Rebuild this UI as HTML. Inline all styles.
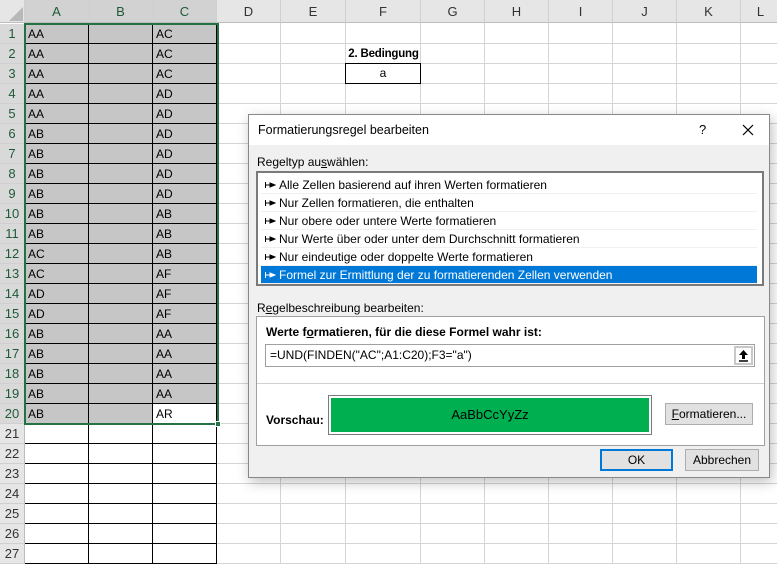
<!DOCTYPE html>
<html><head><meta charset="utf-8"><style>
*{margin:0;padding:0;box-sizing:border-box}
body{width:777px;height:563px;overflow:hidden;position:relative;background:#fff;font-family:"Liberation Sans",Arial,sans-serif;font-size:12px;color:#000}
.a{position:absolute}
.grid{left:25px;top:24px;width:752px;height:540px;
background-image:repeating-linear-gradient(to bottom,transparent 0px,transparent 19px,#d4d4d4 19px,#d4d4d4 20px)}
.vl{position:absolute;top:0;width:1px;height:563px;background:#d4d4d4}
.hdr{top:0;height:23px;background:#e6e6e6;border-bottom:1px solid #bdbdbd;text-align:center;line-height:23px;font-size:13px;color:#333;border-right:1px solid #d0d0d0}
.hs{background:#d2d2d2;color:#1e5a37}
.rh{left:0;width:25px;height:20px;background:#e6e6e6;border-bottom:1px solid #d0d0d0;border-right:1px solid #bdbdbd;text-align:center;line-height:20px;font-size:13px;color:#333}
.rs{background:#d9d9d9;color:#1e5a37}
.c{height:20px;line-height:20px;padding-left:3px;font-size:12px;border-right:1px solid #000;border-bottom:1px solid #000}
.g{background:#c6c6c6}
.dlg{left:248px;top:114px;width:522px;height:364px;background:#f0f0f0;border:1px solid #888;box-shadow:2px 4px 12px rgba(0,0,0,.25)}
.li{position:absolute;left:3px;width:496px;height:18px;line-height:18px;padding-left:18px;font-size:12px;border-bottom:1px solid #f0f0f0}
.li svg{position:absolute;left:4px;top:6px}
.btn{position:absolute;background:#e1e1e1;border:1px solid #adadad;text-align:center;font-size:12px}
</style></head><body>
<div class="a grid"></div>
<div class="vl" style="left:280px"></div><div class="vl" style="left:345px"></div><div class="vl" style="left:420px"></div><div class="vl" style="left:484px"></div><div class="vl" style="left:548px"></div><div class="vl" style="left:612px"></div><div class="vl" style="left:676px"></div><div class="vl" style="left:740px"></div>
<div class="a hdr" style="left:0;width:25px;background:#e6e6e6"><svg width="14" height="14" style="position:absolute;left:9px;top:7px"><polygon points="14,0 14,14 0,14" fill="#b8b8b8"/></svg></div>
<div class="a hdr hs" style="left:25px;width:64px">A</div>
<div class="a hdr hs" style="left:89px;width:64px">B</div>
<div class="a hdr hs" style="left:153px;width:64px">C</div>
<div class="a hdr" style="left:217px;width:64px">D</div>
<div class="a hdr" style="left:281px;width:65px">E</div>
<div class="a hdr" style="left:346px;width:75px">F</div>
<div class="a hdr" style="left:421px;width:64px">G</div>
<div class="a hdr" style="left:485px;width:64px">H</div>
<div class="a hdr" style="left:549px;width:64px">I</div>
<div class="a hdr" style="left:613px;width:64px">J</div>
<div class="a hdr" style="left:677px;width:64px">K</div>
<div class="a hdr" style="left:741px;width:40px">L</div>
<div class="a rh rs" style="top:24px">1</div><div class="a rh rs" style="top:44px">2</div><div class="a rh rs" style="top:64px">3</div><div class="a rh rs" style="top:84px">4</div><div class="a rh rs" style="top:104px">5</div><div class="a rh rs" style="top:124px">6</div><div class="a rh rs" style="top:144px">7</div><div class="a rh rs" style="top:164px">8</div><div class="a rh rs" style="top:184px">9</div><div class="a rh rs" style="top:204px">10</div><div class="a rh rs" style="top:224px">11</div><div class="a rh rs" style="top:244px">12</div><div class="a rh rs" style="top:264px">13</div><div class="a rh rs" style="top:284px">14</div><div class="a rh rs" style="top:304px">15</div><div class="a rh rs" style="top:324px">16</div><div class="a rh rs" style="top:344px">17</div><div class="a rh rs" style="top:364px">18</div><div class="a rh rs" style="top:384px">19</div><div class="a rh rs" style="top:404px">20</div><div class="a rh" style="top:424px">21</div><div class="a rh" style="top:444px">22</div><div class="a rh" style="top:464px">23</div><div class="a rh" style="top:484px">24</div><div class="a rh" style="top:504px">25</div><div class="a rh" style="top:524px">26</div><div class="a rh" style="top:544px">27</div>
<div class="a" style="left:25px;top:24px;width:192px">
<div style="display:grid;grid-template-columns:64px 64px 64px">
<div class="c g">AA</div><div class="c g"></div><div class="c g">AC</div>
<div class="c g">AA</div><div class="c g"></div><div class="c g">AC</div>
<div class="c g">AA</div><div class="c g"></div><div class="c g">AC</div>
<div class="c g">AA</div><div class="c g"></div><div class="c g">AD</div>
<div class="c g">AA</div><div class="c g"></div><div class="c g">AD</div>
<div class="c g">AB</div><div class="c g"></div><div class="c g">AD</div>
<div class="c g">AB</div><div class="c g"></div><div class="c g">AD</div>
<div class="c g">AB</div><div class="c g"></div><div class="c g">AD</div>
<div class="c g">AB</div><div class="c g"></div><div class="c g">AD</div>
<div class="c g">AB</div><div class="c g"></div><div class="c g">AB</div>
<div class="c g">AB</div><div class="c g"></div><div class="c g">AB</div>
<div class="c g">AC</div><div class="c g"></div><div class="c g">AB</div>
<div class="c g">AC</div><div class="c g"></div><div class="c g">AF</div>
<div class="c g">AD</div><div class="c g"></div><div class="c g">AF</div>
<div class="c g">AD</div><div class="c g"></div><div class="c g">AF</div>
<div class="c g">AB</div><div class="c g"></div><div class="c g">AA</div>
<div class="c g">AB</div><div class="c g"></div><div class="c g">AA</div>
<div class="c g">AB</div><div class="c g"></div><div class="c g">AA</div>
<div class="c g">AB</div><div class="c g"></div><div class="c g">AA</div>
<div class="c g">AB</div><div class="c g"></div><div class="c">AR</div>
<div class="c"></div><div class="c"></div><div class="c"></div>
<div class="c"></div><div class="c"></div><div class="c"></div>
<div class="c"></div><div class="c"></div><div class="c"></div>
<div class="c"></div><div class="c"></div><div class="c"></div>
<div class="c"></div><div class="c"></div><div class="c"></div>
<div class="c"></div><div class="c"></div><div class="c"></div>
<div class="c"></div><div class="c"></div><div class="c"></div>
</div></div>
<div class="a" style="left:24px;top:23px;width:195px;height:402px;border:2px solid #217346"></div>
<div class="a" style="left:215px;top:421px;width:6px;height:6px;background:#217346;border:1px solid #fff"></div>
<div class="a" style="left:346px;top:44px;width:75px;height:20px;line-height:20px;text-align:center;font-weight:bold;font-size:11.5px;white-space:nowrap;letter-spacing:-0.2px">2. Bedingung</div>
<div class="a" style="left:345px;top:63px;width:76px;height:21px;border:1px solid #000;text-align:center;line-height:19px;font-size:12px;background:#fff">a</div>
<div class="a dlg">
 <div class="a" style="left:0;top:0;width:520px;height:30px;background:#fff;line-height:30px;padding-left:9px;font-size:12.5px">Formatierungsregel bearbeiten
  <span style="position:absolute;left:450px;top:0;font-size:13px">?</span>
  <svg style="position:absolute;left:493px;top:9px" width="12" height="12"><path d="M1 1L11 11M11 1L1 11" stroke="#000" stroke-width="1.2"/></svg></div>
 <div class="a" style="left:8px;top:40px;font-size:12px">Regeltyp au<u>s</u>wählen:</div>
 <div class="a" style="left:7px;top:56px;width:508px;height:115px;background:#fff;border:2px solid #7a7a7a"></div>
 <div class="a" style="left:9px;top:58px;width:504px;height:111px">
  <div class="li" style="top:3px"><svg width="11" height="6"><path d="M0 3H10M5 1L10 3L5 5Z" stroke="#000" fill="#000"/><path d="M0.5 0V6" stroke="#000"/></svg>Alle Zellen basierend auf ihren Werten formatieren</div>
  <div class="li" style="top:21px"><svg width="11" height="6"><path d="M0 3H10M5 1L10 3L5 5Z" stroke="#000" fill="#000"/><path d="M0.5 0V6" stroke="#000"/></svg>Nur Zellen formatieren, die enthalten</div>
  <div class="li" style="top:39px"><svg width="11" height="6"><path d="M0 3H10M5 1L10 3L5 5Z" stroke="#000" fill="#000"/><path d="M0.5 0V6" stroke="#000"/></svg>Nur obere oder untere Werte formatieren</div>
  <div class="li" style="top:57px"><svg width="11" height="6"><path d="M0 3H10M5 1L10 3L5 5Z" stroke="#000" fill="#000"/><path d="M0.5 0V6" stroke="#000"/></svg>Nur Werte über oder unter dem Durchschnitt formatieren</div>
  <div class="li" style="top:75px"><svg width="11" height="6"><path d="M0 3H10M5 1L10 3L5 5Z" stroke="#000" fill="#000"/><path d="M0.5 0V6" stroke="#000"/></svg>Nur eindeutige oder doppelte Werte formatieren</div>
  <div class="li" style="top:93px;background:#0078d7;color:#fff"><svg width="11" height="6"><path d="M0 3H10M5 1L10 3L5 5Z" stroke="#fff" fill="#fff"/><path d="M0.5 0V6" stroke="#fff"/></svg>Formel zur Ermittlung der zu formatierenden Zellen verwenden</div>
 </div>
 <div class="a" style="left:8px;top:186px;font-size:12px">R<u>e</u>gelbeschreibung bearbeiten:</div>
 <div class="a" style="left:7px;top:201px;width:509px;height:130px;background:#fff;border:1px solid #a0a0a0">
  <div class="a" style="left:9px;top:8px;font-weight:bold;font-size:12px">Werte f<u>o</u>rmatieren, für die diese Formel wahr ist:</div>
  <div class="a" style="left:8px;top:27px;width:490px;height:23px;border:1px solid #a0a0a0;line-height:21px;padding-left:4px;font-size:12px">=UND(FINDEN("AC";A1:C20);F3="a")
   <div style="position:absolute;right:1px;top:1px;width:19px;height:19px;background:#fff;border:2px solid #c8c8c8"><svg width="15" height="15" style="position:absolute;left:0;top:0"><path d="M7.5 2L3 7H6V11H9V7H12Z" fill="#000"/><path d="M3 13H12" stroke="#000" stroke-width="1.5"/></svg></div></div>
  <div class="a" style="left:0;top:66px;width:507px;height:1px;background:#d0d0d0"></div>
  <div class="a" style="left:9px;top:96px;font-weight:bold;font-size:12px">Vorschau:</div>
  <div class="a" style="left:71px;top:78px;width:324px;height:40px;border:1px solid #7a7a7a;padding:2px"><div style="width:100%;height:100%;background:#00b050;text-align:center;line-height:34px;font-size:13px">AaBbCcYyZz</div></div>
  <div class="btn" style="left:408px;top:86px;width:88px;height:22px;line-height:20px"><u>F</u>ormatieren...</div>
 </div>
 <div class="btn" style="left:351px;top:334px;width:73px;height:22px;line-height:18px;border:2px solid #0078d7">OK</div>
 <div class="btn" style="left:436px;top:334px;width:74px;height:22px;line-height:20px">Abbrechen</div>
</div>
</body></html>
